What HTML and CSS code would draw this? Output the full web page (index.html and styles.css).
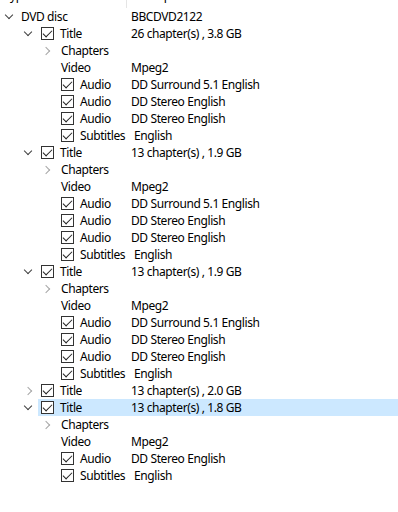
FILE: index.html
```html
<!DOCTYPE html>
<html lang="en">
<head>
  <meta charset="UTF-8" />
  <title>Disc contents</title>
  <link rel="stylesheet" href="styles.css">
</head>
<body>
  <div class="tree">
    <div class="tree-head">
      <div class="col-name">Type</div>
      <div class="col-desc">Description</div>
    </div>

    <div class="row lvl0"><span class="exp open"></span><span class="name">DVD disc</span><span class="desc">BBCDVD2122</span></div>

    <div class="row lvl1"><span class="exp open"></span><span class="chk"></span><span class="name">Title</span><span class="desc">26 chapter(s) , 3.8 GB</span></div>
    <div class="row lvl2"><span class="exp closed"></span><span class="name">Chapters</span><span class="desc"></span></div>
    <div class="row lvl2"><span class="exp"></span><span class="name">Video</span><span class="desc">Mpeg2</span></div>
    <div class="row lvl2"><span class="exp"></span><span class="chk"></span><span class="name">Audio</span><span class="desc">DD Surround 5.1 English</span></div>
    <div class="row lvl2"><span class="exp"></span><span class="chk"></span><span class="name">Audio</span><span class="desc">DD Stereo English</span></div>
    <div class="row lvl2"><span class="exp"></span><span class="chk"></span><span class="name">Audio</span><span class="desc">DD Stereo English</span></div>
    <div class="row lvl2"><span class="exp"></span><span class="chk"></span><span class="name">Subtitles</span><span class="desc shift">English</span></div>

    <div class="row lvl1"><span class="exp open"></span><span class="chk"></span><span class="name">Title</span><span class="desc">13 chapter(s) , 1.9 GB</span></div>
    <div class="row lvl2"><span class="exp closed"></span><span class="name">Chapters</span><span class="desc"></span></div>
    <div class="row lvl2"><span class="exp"></span><span class="name">Video</span><span class="desc">Mpeg2</span></div>
    <div class="row lvl2"><span class="exp"></span><span class="chk"></span><span class="name">Audio</span><span class="desc">DD Surround 5.1 English</span></div>
    <div class="row lvl2"><span class="exp"></span><span class="chk"></span><span class="name">Audio</span><span class="desc">DD Stereo English</span></div>
    <div class="row lvl2"><span class="exp"></span><span class="chk"></span><span class="name">Audio</span><span class="desc">DD Stereo English</span></div>
    <div class="row lvl2"><span class="exp"></span><span class="chk"></span><span class="name">Subtitles</span><span class="desc shift">English</span></div>

    <div class="row lvl1"><span class="exp open"></span><span class="chk"></span><span class="name">Title</span><span class="desc">13 chapter(s) , 1.9 GB</span></div>
    <div class="row lvl2"><span class="exp closed"></span><span class="name">Chapters</span><span class="desc"></span></div>
    <div class="row lvl2"><span class="exp"></span><span class="name">Video</span><span class="desc">Mpeg2</span></div>
    <div class="row lvl2"><span class="exp"></span><span class="chk"></span><span class="name">Audio</span><span class="desc">DD Surround 5.1 English</span></div>
    <div class="row lvl2"><span class="exp"></span><span class="chk"></span><span class="name">Audio</span><span class="desc">DD Stereo English</span></div>
    <div class="row lvl2"><span class="exp"></span><span class="chk"></span><span class="name">Audio</span><span class="desc">DD Stereo English</span></div>
    <div class="row lvl2"><span class="exp"></span><span class="chk"></span><span class="name">Subtitles</span><span class="desc shift">English</span></div>

    <div class="row lvl1"><span class="exp closed"></span><span class="chk"></span><span class="name">Title</span><span class="desc">13 chapter(s) , 2.0 GB</span></div>

    <div class="row lvl1 selected"><span class="exp open"></span><span class="chk"></span><span class="name">Title</span><span class="desc">13 chapter(s) , 1.8 GB</span></div>
    <div class="row lvl2"><span class="exp closed"></span><span class="name">Chapters</span><span class="desc"></span></div>
    <div class="row lvl2"><span class="exp"></span><span class="name">Video</span><span class="desc">Mpeg2</span></div>
    <div class="row lvl2"><span class="exp"></span><span class="chk"></span><span class="name">Audio</span><span class="desc">DD Stereo English</span></div>
    <div class="row lvl2"><span class="exp"></span><span class="chk"></span><span class="name">Subtitles</span><span class="desc shift">English</span></div>
  </div>
</body>
</html>
```

FILE: styles.css
```css
:root {
  --text: #000000;
  --select: #cce8ff;
  --line: #e5e5e5;
  --chev-open: #404040;
  --chev-closed: #a6a6a6;
}

body {
  margin: 0;
  background: #ffffff;
  color: var(--text);
  font-family: 'Noto Sans', 'Liberation Sans', sans-serif;
  font-size: 12px;
  letter-spacing: -0.4px;
}

.tree-head {
  display: flex;
  height: 25px;
  margin-top: -17px;
  align-items: center;
}

.tree-head .col-name {
  width: 122px;
  padding-left: 4px;
  border-right: 1px solid var(--line);
  height: 100%;
  display: flex;
  align-items: center;
}

.tree-head .col-desc {
  padding-left: 4px;
}

.row {
  display: flex;
  align-items: center;
  height: 17px;
  line-height: 17px;
  white-space: nowrap;
}

.row .name {
  flex: none;
}

.desc.shift {
  margin-left: 3px;
}

.lvl0 { padding-left: 2px; }
.lvl1 { padding-left: 21px; }
.lvl2 { padding-left: 40px; }

.lvl0 .name { width: 110px; }
.lvl1 .name { width: 71px; }
.lvl2 .name { width: 70px; }
.lvl2 .chk + .name { width: 51px; }

.selected {
  background: linear-gradient(to right, transparent 38px, var(--select) 38px);
}

.exp {
  width: 19px;
  height: 17px;
  flex: none;
  position: relative;
}

.lvl1 .exp { width: 20px; }
.lvl2 .exp { width: 21px; }

.exp.open::before,
.exp.closed::before {
  content: '';
  position: absolute;
  width: 5px;
  height: 5px;
  border-right: 1.2px solid var(--chev-open);
  border-bottom: 1.2px solid var(--chev-open);
}

.exp.open::before {
  left: 4px;
  top: 4px;
  transform: rotate(45deg);
}

.lvl1 .exp.open::before { left: 4px; }

.exp.closed::before {
  left: 3px;
  top: 6px;
  transform: rotate(-45deg);
  border-color: var(--chev-closed);
}

.lvl1 .exp.closed::before { left: 4px; }

.chk {
  width: 11px;
  height: 11px;
  border: 1px solid #333333;
  background: #ffffff;
  flex: none;
  margin-right: 6px;
  position: relative;
}

.chk::after {
  content: '';
  position: absolute;
  left: 3px;
  top: 0px;
  width: 4px;
  height: 8px;
  border-right: 1px solid #222222;
  border-bottom: 1px solid #222222;
  transform: rotate(45deg);
}
```
